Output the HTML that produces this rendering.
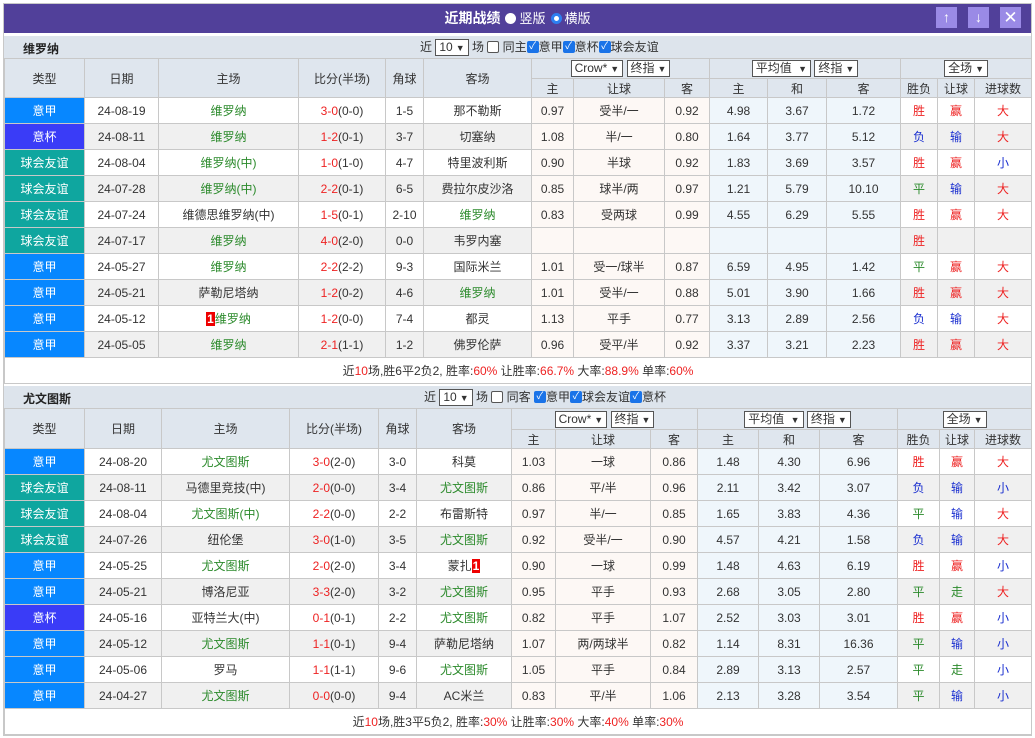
<!DOCTYPE html>
<html><head><meta charset="utf-8">
<style>
*{box-sizing:border-box;margin:0;padding:0}
body{width:1035px;height:738px;background:#fff;font-family:"Liberation Sans","Noto Sans CJK SC",sans-serif;font-size:12px;color:#333;position:relative;overflow:hidden}
#frame{position:absolute;left:3px;top:3px;width:1029px;height:733px;border:1px solid #c8c8c8}
#title{position:absolute;left:4px;top:4px;width:1027px;height:29px;background:#51409a;color:#fff;text-align:center;line-height:29px;font-size:13px}
#title b{font-size:14px}
.rad{display:inline-block;width:11px;height:11px;border-radius:50%;background:#fff;vertical-align:-1px;margin:0 3px 0 5px}
.rad.on{background:#fff;border:3px solid #2d7ff0}
.btn{position:absolute;top:7px;width:21px;height:21px;background:#9a8ae6;color:#fff;text-align:center;line-height:21px;font-size:14px;font-weight:bold}
.bar{position:absolute;left:4px;width:1027px;height:22px;background:#dde4ec;font-size:12px}
.bar .nm{position:absolute;left:19px;top:4px;font-weight:bold;color:#222}
.bar .ctl{position:absolute;top:2px;color:#333;line-height:18px}
.sel{display:inline-block;border:1px solid #555;background:#fff;height:17px;line-height:15px;padding:0 3px;font-size:12px;vertical-align:middle}
.sel i{font-style:normal;font-size:9px;margin-left:3px}
.cb{display:inline-block;width:12px;height:12px;border:1px solid #555;border-radius:2px;background:#fff;vertical-align:middle;margin-top:-2px;font-size:10px;line-height:10px;text-align:center;color:#fff}
.cb.on{background:#1a73e8;border-color:#1a73e8}
table{position:absolute;left:4px;width:1027px;border-collapse:collapse;table-layout:fixed}
td{border:1px solid #c8c8c8;text-align:center;white-space:nowrap;overflow:hidden;font-size:12px}
tr.h td{background:#dfe6ee;color:#333}
tr.d td{height:26px}
tr.e td{background:#f0f0f0}
td.o1,tr.e td.o1{background:#fdf8f5}
td.o2,tr.e td.o2{background:#eff6fb}
td.yj,tr.e td.yj{background:#0787ff;color:#fff}
td.yb,tr.e td.yb{background:#3a3cf7;color:#fff}
td.yy,tr.e td.yy{background:#0fa69f;color:#fff}
.g{color:#2b8a2b}.r{color:#e22}.b{color:#1a2fd0}
.tag{background:#e00;color:#fff;font-weight:bold;padding:0 1px}
tr.s td{height:26px;background:#fff}
</style></head><body>
<div id="frame"></div>
<div id="title"><b>近期战绩</b><span class="rad"></span>竖版<span class="rad on"></span>横版</div>
<div class="btn" style="left:936px">&#8593;</div>
<div class="btn" style="left:968px">&#8595;</div>
<div class="btn" style="left:1000px;font-size:17px;font-weight:normal">&#10005;</div>

<div class="bar" style="top:36px"><span class="nm">维罗纳</span><span class="ctl" style="left:416px">近 <span class="sel">10<i>&#9660;</i></span> 场 <span class="cb"></span> 同主<span class="cb on">&#10003;</span>意甲<span class="cb on">&#10003;</span>意杯<span class="cb on">&#10003;</span>球会友谊</span></div>
<table style="top:58px">
<colgroup><col style="width:80px"><col style="width:74px"><col style="width:140px"><col style="width:87px"><col style="width:38px"><col style="width:108px"><col style="width:42px"><col style="width:91px"><col style="width:45px"><col style="width:58px"><col style="width:59px"><col style="width:74px"><col style="width:37px"><col style="width:37px"><col style="width:57px"></colgroup>
<tr class="h"><td rowspan="2" style="height:39px">类型</td><td rowspan="2">日期</td><td rowspan="2">主场</td><td rowspan="2">比分(半场)</td><td rowspan="2">角球</td><td rowspan="2">客场</td><td colspan="3" style="height:20px"><span class="sel">Crow*<i>&#9660;</i></span> <span class="sel">终指<i>&#9660;</i></span></td><td colspan="3"><span class="sel">平均值 <i>&#9660;</i></span> <span class="sel">终指<i>&#9660;</i></span></td><td colspan="3"><span class="sel">全场<i>&#9660;</i></span></td></tr>
<tr class="h"><td style="height:19px">主</td><td>让球</td><td>客</td><td>主</td><td>和</td><td>客</td><td>胜负</td><td>让球</td><td>进球数</td></tr>
<tr class="d"><td class="yj">意甲</td><td>24-08-19</td><td class="g">维罗纳</td><td><span class="r">3-0</span>(0-0)</td><td>1-5</td><td>那不勒斯</td><td class="o1">0.97</td><td class="o1">受半/一</td><td class="o1">0.92</td><td class="o2">4.98</td><td class="o2">3.67</td><td class="o2">1.72</td><td class="r">胜</td><td class="r">赢</td><td class="r">大</td></tr>
<tr class="d e"><td class="yb">意杯</td><td>24-08-11</td><td class="g">维罗纳</td><td><span class="r">1-2</span>(0-1)</td><td>3-7</td><td>切塞纳</td><td class="o1">1.08</td><td class="o1">半/一</td><td class="o1">0.80</td><td class="o2">1.64</td><td class="o2">3.77</td><td class="o2">5.12</td><td class="b">负</td><td class="b">输</td><td class="r">大</td></tr>
<tr class="d"><td class="yy">球会友谊</td><td>24-08-04</td><td class="g">维罗纳(中)</td><td><span class="r">1-0</span>(1-0)</td><td>4-7</td><td>特里波利斯</td><td class="o1">0.90</td><td class="o1">半球</td><td class="o1">0.92</td><td class="o2">1.83</td><td class="o2">3.69</td><td class="o2">3.57</td><td class="r">胜</td><td class="r">赢</td><td class="b">小</td></tr>
<tr class="d e"><td class="yy">球会友谊</td><td>24-07-28</td><td class="g">维罗纳(中)</td><td><span class="r">2-2</span>(0-1)</td><td>6-5</td><td>费拉尔皮沙洛</td><td class="o1">0.85</td><td class="o1">球半/两</td><td class="o1">0.97</td><td class="o2">1.21</td><td class="o2">5.79</td><td class="o2">10.10</td><td class="g">平</td><td class="b">输</td><td class="r">大</td></tr>
<tr class="d"><td class="yy">球会友谊</td><td>24-07-24</td><td>维德思维罗纳(中)</td><td><span class="r">1-5</span>(0-1)</td><td>2-10</td><td class="g">维罗纳</td><td class="o1">0.83</td><td class="o1">受两球</td><td class="o1">0.99</td><td class="o2">4.55</td><td class="o2">6.29</td><td class="o2">5.55</td><td class="r">胜</td><td class="r">赢</td><td class="r">大</td></tr>
<tr class="d e"><td class="yy">球会友谊</td><td>24-07-17</td><td class="g">维罗纳</td><td><span class="r">4-0</span>(2-0)</td><td>0-0</td><td>韦罗内塞</td><td class="o1"></td><td class="o1"></td><td class="o1"></td><td class="o2"></td><td class="o2"></td><td class="o2"></td><td class="r">胜</td><td></td><td></td></tr>
<tr class="d"><td class="yj">意甲</td><td>24-05-27</td><td class="g">维罗纳</td><td><span class="r">2-2</span>(2-2)</td><td>9-3</td><td>国际米兰</td><td class="o1">1.01</td><td class="o1">受一/球半</td><td class="o1">0.87</td><td class="o2">6.59</td><td class="o2">4.95</td><td class="o2">1.42</td><td class="g">平</td><td class="r">赢</td><td class="r">大</td></tr>
<tr class="d e"><td class="yj">意甲</td><td>24-05-21</td><td>萨勒尼塔纳</td><td><span class="r">1-2</span>(0-2)</td><td>4-6</td><td class="g">维罗纳</td><td class="o1">1.01</td><td class="o1">受半/一</td><td class="o1">0.88</td><td class="o2">5.01</td><td class="o2">3.90</td><td class="o2">1.66</td><td class="r">胜</td><td class="r">赢</td><td class="r">大</td></tr>
<tr class="d"><td class="yj">意甲</td><td>24-05-12</td><td class="g"><span class="tag">1</span>维罗纳</td><td><span class="r">1-2</span>(0-0)</td><td>7-4</td><td>都灵</td><td class="o1">1.13</td><td class="o1">平手</td><td class="o1">0.77</td><td class="o2">3.13</td><td class="o2">2.89</td><td class="o2">2.56</td><td class="b">负</td><td class="b">输</td><td class="r">大</td></tr>
<tr class="d e"><td class="yj">意甲</td><td>24-05-05</td><td class="g">维罗纳</td><td><span class="r">2-1</span>(1-1)</td><td>1-2</td><td>佛罗伦萨</td><td class="o1">0.96</td><td class="o1">受平/半</td><td class="o1">0.92</td><td class="o2">3.37</td><td class="o2">3.21</td><td class="o2">2.23</td><td class="r">胜</td><td class="r">赢</td><td class="r">大</td></tr>
<tr class="s"><td colspan="15">近<span class="r">10</span>场,胜6平2负2, 胜率:<span class="r">60%</span> 让胜率:<span class="r">66.7%</span> 大率:<span class="r">88.9%</span> 单率:<span class="r">60%</span></td></tr>
</table>

<div class="bar" style="top:386px"><span class="nm">尤文图斯</span><span class="ctl" style="left:420px">近 <span class="sel">10<i>&#9660;</i></span> 场 <span class="cb"></span> 同客 <span class="cb on">&#10003;</span>意甲<span class="cb on">&#10003;</span>球会友谊<span class="cb on">&#10003;</span>意杯</span></div>
<table style="top:408px">
<colgroup><col style="width:80px"><col style="width:77px"><col style="width:128px"><col style="width:89px"><col style="width:38px"><col style="width:95px"><col style="width:44px"><col style="width:95px"><col style="width:47px"><col style="width:61px"><col style="width:61px"><col style="width:78px"><col style="width:42px"><col style="width:35px"><col style="width:57px"></colgroup>
<tr class="h"><td rowspan="2" style="height:40px">类型</td><td rowspan="2">日期</td><td rowspan="2">主场</td><td rowspan="2">比分(半场)</td><td rowspan="2">角球</td><td rowspan="2">客场</td><td colspan="3" style="height:21px"><span class="sel">Crow*<i>&#9660;</i></span> <span class="sel">终指<i>&#9660;</i></span></td><td colspan="3"><span class="sel">平均值 <i>&#9660;</i></span> <span class="sel">终指<i>&#9660;</i></span></td><td colspan="3"><span class="sel">全场<i>&#9660;</i></span></td></tr>
<tr class="h"><td style="height:19px">主</td><td>让球</td><td>客</td><td>主</td><td>和</td><td>客</td><td>胜负</td><td>让球</td><td>进球数</td></tr>
<tr class="d"><td class="yj">意甲</td><td>24-08-20</td><td class="g">尤文图斯</td><td><span class="r">3-0</span>(2-0)</td><td>3-0</td><td>科莫</td><td class="o1">1.03</td><td class="o1">一球</td><td class="o1">0.86</td><td class="o2">1.48</td><td class="o2">4.30</td><td class="o2">6.96</td><td class="r">胜</td><td class="r">赢</td><td class="r">大</td></tr>
<tr class="d e"><td class="yy">球会友谊</td><td>24-08-11</td><td>马德里竞技(中)</td><td><span class="r">2-0</span>(0-0)</td><td>3-4</td><td class="g">尤文图斯</td><td class="o1">0.86</td><td class="o1">平/半</td><td class="o1">0.96</td><td class="o2">2.11</td><td class="o2">3.42</td><td class="o2">3.07</td><td class="b">负</td><td class="b">输</td><td class="b">小</td></tr>
<tr class="d"><td class="yy">球会友谊</td><td>24-08-04</td><td class="g">尤文图斯(中)</td><td><span class="r">2-2</span>(0-0)</td><td>2-2</td><td>布雷斯特</td><td class="o1">0.97</td><td class="o1">半/一</td><td class="o1">0.85</td><td class="o2">1.65</td><td class="o2">3.83</td><td class="o2">4.36</td><td class="g">平</td><td class="b">输</td><td class="r">大</td></tr>
<tr class="d e"><td class="yy">球会友谊</td><td>24-07-26</td><td>纽伦堡</td><td><span class="r">3-0</span>(1-0)</td><td>3-5</td><td class="g">尤文图斯</td><td class="o1">0.92</td><td class="o1">受半/一</td><td class="o1">0.90</td><td class="o2">4.57</td><td class="o2">4.21</td><td class="o2">1.58</td><td class="b">负</td><td class="b">输</td><td class="r">大</td></tr>
<tr class="d"><td class="yj">意甲</td><td>24-05-25</td><td class="g">尤文图斯</td><td><span class="r">2-0</span>(2-0)</td><td>3-4</td><td>蒙扎<span class="tag">1</span></td><td class="o1">0.90</td><td class="o1">一球</td><td class="o1">0.99</td><td class="o2">1.48</td><td class="o2">4.63</td><td class="o2">6.19</td><td class="r">胜</td><td class="r">赢</td><td class="b">小</td></tr>
<tr class="d e"><td class="yj">意甲</td><td>24-05-21</td><td>博洛尼亚</td><td><span class="r">3-3</span>(2-0)</td><td>3-2</td><td class="g">尤文图斯</td><td class="o1">0.95</td><td class="o1">平手</td><td class="o1">0.93</td><td class="o2">2.68</td><td class="o2">3.05</td><td class="o2">2.80</td><td class="g">平</td><td class="g">走</td><td class="r">大</td></tr>
<tr class="d"><td class="yb">意杯</td><td>24-05-16</td><td>亚特兰大(中)</td><td><span class="r">0-1</span>(0-1)</td><td>2-2</td><td class="g">尤文图斯</td><td class="o1">0.82</td><td class="o1">平手</td><td class="o1">1.07</td><td class="o2">2.52</td><td class="o2">3.03</td><td class="o2">3.01</td><td class="r">胜</td><td class="r">赢</td><td class="b">小</td></tr>
<tr class="d e"><td class="yj">意甲</td><td>24-05-12</td><td class="g">尤文图斯</td><td><span class="r">1-1</span>(0-1)</td><td>9-4</td><td>萨勒尼塔纳</td><td class="o1">1.07</td><td class="o1">两/两球半</td><td class="o1">0.82</td><td class="o2">1.14</td><td class="o2">8.31</td><td class="o2">16.36</td><td class="g">平</td><td class="b">输</td><td class="b">小</td></tr>
<tr class="d"><td class="yj">意甲</td><td>24-05-06</td><td>罗马</td><td><span class="r">1-1</span>(1-1)</td><td>9-6</td><td class="g">尤文图斯</td><td class="o1">1.05</td><td class="o1">平手</td><td class="o1">0.84</td><td class="o2">2.89</td><td class="o2">3.13</td><td class="o2">2.57</td><td class="g">平</td><td class="g">走</td><td class="b">小</td></tr>
<tr class="d e"><td class="yj">意甲</td><td>24-04-27</td><td class="g">尤文图斯</td><td><span class="r">0-0</span>(0-0)</td><td>9-4</td><td>AC米兰</td><td class="o1">0.83</td><td class="o1">平/半</td><td class="o1">1.06</td><td class="o2">2.13</td><td class="o2">3.28</td><td class="o2">3.54</td><td class="g">平</td><td class="b">输</td><td class="b">小</td></tr>
<tr class="s"><td colspan="15">近<span class="r">10</span>场,胜3平5负2, 胜率:<span class="r">30%</span> 让胜率:<span class="r">30%</span> 大率:<span class="r">40%</span> 单率:<span class="r">30%</span></td></tr>
</table>
</body></html>
